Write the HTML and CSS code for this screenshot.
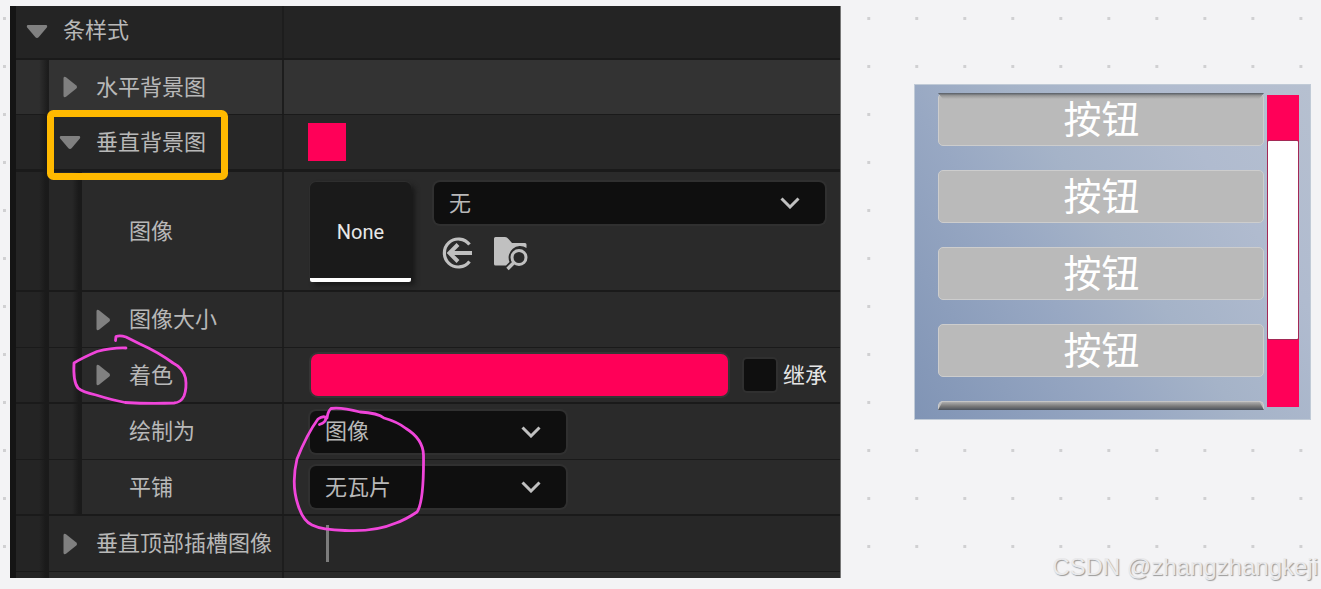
FILE: index.html
```
<!doctype html>
<html lang="zh-CN">
	<head>
		<meta charset="UTF-8" />
		<meta name="viewport" content="width=device-width, initial-scale=1.0" />
		<title>条样式</title>
		<link rel="stylesheet" href="styles.css">
	</head>
	<body>
		<div class="details">
			<div class="row head">
				<div class="name"><svg class="arrow" viewBox="0 0 22 22"><path d="M2 4h18q2 .5 .8 2.500l-8 9.500q-1.800 2-3.600 0l-8-9.500Q0 4.500 2 4z" /></svg><span>条样式</span></div>
				<div class="value"></div>
			</div>
			<div class="row hover">
				<div class="indent"></div>
				<div class="name"><svg class="arrow" viewBox="0 0 22 22"><path d="M4.500 2q.5-2 2.500-.8l10 8q2 1.800 0 3.600l-10 8q-2 1.200-2.500-.8z" /></svg><span>水平背景图</span></div>
				<div class="value"></div>
			</div>
			<div class="row sub thick">
				<div class="indent"></div>
				<div class="name"><svg class="arrow" viewBox="0 0 22 22"><path d="M2 5h18q2 .5 .8 2.500l-8 9.500q-1.800 2-3.600 0l-8-9.500Q0 5.500 2 5z" /></svg><span>垂直背景图</span></div>
				<div class="value"><div class="swatch"></div></div>
			</div>
			<div class="row tall">
				<div class="indent"></div>
				<div class="indent inner"></div>
				<div class="name"><span class="leaf">图像</span></div>
				<div class="value asset">
					<div class="thumb">None</div>
					<div class="picker">
						<div class="select wide"><span>无</span><svg class="chevron" viewBox="0 0 20 12"><path d="M1.500 1.500l8.500 8.500l8.500-8.500" /></svg></div>
						<div class="tools">
							<svg width="34" height="34" viewBox="0 0 34 34"><path class="line" d="M29.500 8.500A14 14 0 1 0 29.500 25.500" stroke-width="3.200" /><path class="line" d="M32 17H9.500M18 8.500L9.500 17l8.500 8.500" stroke-width="4" /></svg>
							<svg width="36" height="36" viewBox="0 0 36 36"><path class="fill" d="M3.500 1H13q2 0 3.500 2L20 7h13q1.500 0 1.500 1.500V12A11.500 11.500 0 0 0 17.500 26L14 29.500H3.500Q2 29.500 2 28V2.500Q2 1 3.500 1z" /><circle class="line" cx="27" cy="21.500" r="7" stroke-width="3" /><path class="line" d="M22 26.500L15.500 33" stroke-width="3.400" /></svg>
						</div>
					</div>
				</div>
			</div>
			<div class="row thin">
				<div class="indent"></div>
				<div class="indent inner"></div>
				<div class="name"><svg class="arrow" viewBox="0 0 22 22"><path d="M4.500 2q.5-2 2.500-.8l10 8q2 1.800 0 3.600l-10 8q-2 1.200-2.500-.8z" /></svg><span>图像大小</span></div>
				<div class="value"></div>
			</div>
			<div class="row">
				<div class="indent"></div>
				<div class="indent inner"></div>
				<div class="name"><svg class="arrow" viewBox="0 0 22 22"><path d="M4.500 2q.5-2 2.500-.8l10 8q2 1.800 0 3.600l-10 8q-2 1.200-2.500-.8z" /></svg><span>着色</span></div>
				<div class="value"><div class="color"></div><div class="check"></div><span class="inherit">继承</span></div>
			</div>
			<div class="row thin">
				<div class="indent"></div>
				<div class="indent inner"></div>
				<div class="name"><span class="leaf">绘制为</span></div>
				<div class="value"><div class="select"><span>图像</span><svg class="chevron" viewBox="0 0 20 12"><path d="M1.500 1.500l8.500 8.500l8.500-8.500" /></svg></div></div>
			</div>
			<div class="row">
				<div class="indent"></div>
				<div class="indent inner"></div>
				<div class="name"><span class="leaf">平铺</span></div>
				<div class="value"><div class="select"><span>无瓦片</span><svg class="chevron" viewBox="0 0 20 12"><path d="M1.500 1.500l8.500 8.500l8.500-8.500" /></svg></div></div>
			</div>
			<div class="row sub thin">
				<div class="indent"></div>
				<div class="name"><svg class="arrow" viewBox="0 0 22 22"><path d="M4.500 2q.5-2 2.500-.8l10 8q2 1.800 0 3.600l-10 8q-2 1.200-2.500-.8z" /></svg><span>垂直顶部插槽图像</span></div>
				<div class="value"><div class="bar"></div></div>
			</div>
			<div class="row last">
				<div class="indent"></div>
				<div class="name"></div>
				<div class="value"></div>
			</div>
		</div>

		<div class="preview">
			<div class="list">
				<div class="btn">按钮</div>
				<div class="btn">按钮</div>
				<div class="btn">按钮</div>
				<div class="btn">按钮</div>
				<div class="btn cut"></div>
			</div>
			<div class="scrollbar"><div class="handle"></div></div>
		</div>

		<!-- hand-drawn marks over the panel -->
		<svg class="marks" viewBox="0 0 1321 589">
			<rect x="50.500" y="113.500" width="174" height="63" rx="3" stroke="#ffb900" stroke-width="7" />
			<g stroke="#f045da" stroke-width="2.800" stroke-linecap="round" stroke-linejoin="round">
				<path d="M115.500 340.500L116 336.500Q120 335 126 337L140 344Q158 352 173 363Q183 368 185.500 378Q187 388 184 396Q181 402.500 174 403Q150 404 125 402.500Q112 400 96 395Q82 392 78 388Q73 382 74 363Q82 358 97 351.500Q112 347.500 126 348" />
				<path d="M319.500 424.500Q327 422 325.500 417Q322 416 318 419Q307 434 297 459Q291 484 298 505Q303 521 312 525Q322 530 345 530.500Q375 532 396 523Q405 520 417 512Q424 502 423.500 455Q423 439 406 428.500Q398 422 384 418Q378 413 360 412Q341 407 331 408.500Q328 411 327 418" />
			</g>
		</svg>
		<div class="watermark">CSDN @zhangzhangkeji</div>
	</body>
</html>
```
FILE: styles.css
```
* {
	box-sizing: border-box;
}
body {
	margin: 0;
	width: 1321px;
	height: 589px;
	padding: 6px 10px 0 10px;
	display: flex;
	justify-content: space-between;
	align-items: flex-start;
	overflow: hidden;
	position: relative;
	background-color: #f3f3f5;
	background-image: conic-gradient(from 270deg at 3px 3px, #d0d0d2 25%, transparent 0);
	background-position: 3px 17px;
	background-size: 48.030px 48px;
	font-family: "Noto Sans CJK SC", sans-serif;
	font-size: 22px;
	color: #b8b8b8;
}
.details {
	width: 831px;
	height: 572px;
	padding-left: 6px;
	background-color: #151515;
	border-right: 1px solid #777;
	overflow: hidden;
}
.row {
	display: flex;
	height: 56px;
	border-bottom: 2px solid #1a1a1a;
	background-color: #2a2a2a;
}
.row.thin {
	border-bottom-width: 1px;
}
.row.head {
	height: 54px;
	background-color: #242424;
}
.row.hover {
	height: 55px;
	border-bottom-width: 1px;
	background-color: #333;
}
.row.sub {
	background-color: #272727;
}
.row.thick {
	height: 57px;
	border-bottom-width: 3px;
}
.row.tall {
	height: 120px;
}
.indent {
	width: 33px;
	flex-shrink: 0;
	background: linear-gradient(90deg, #242424 70%, #1a1a1a 90%);
}
.indent.inner {
	background: linear-gradient(90deg, #272727 70%, #1a1a1a 90%);
}
.hover .indent {
	background: linear-gradient(90deg, #2e2e2e 70%, #1c1c1c 96%);
}
.name {
	display: flex;
	align-items: center;
	flex-shrink: 0;
	width: 268px;
	padding-left: 10px;
	border-right: 2px solid #1d1d1d;
	line-height: 30px;
	white-space: nowrap;
}
.indent + .name {
	width: 235px;
}
.inner + .name {
	width: 202px;
}
.name span {
	padding-bottom: 5px;
}
.head .name span {
	padding-bottom: 8px;
}
.arrow {
	width: 22px;
	height: 22px;
	margin-right: 15px;
	fill: #808080;
}
.name .leaf {
	margin-left: 37px;
}
.value {
	flex: 1;
	display: flex;
	align-items: center;
	padding-left: 26px;
}
.swatch {
	width: 38px;
	height: 38px;
	margin-left: -2px;
	background-color: #ff0058;
}
.asset {
	align-items: flex-start;
	padding-top: 10px;
}
.thumb {
	width: 101px;
	height: 100px;
	padding-top: 4px;
	display: flex;
	justify-content: center;
	align-items: center;
	border-radius: 6px 6px 2px 2px;
	border-bottom: 4px solid #fff;
	background-color: #1a1a1a;
	box-shadow: 4px 3px 5px #191919, 0 0 0 1px #303030;
	font-family: Roboto, sans-serif;
	font-size: 20px;
	color: #e8e8e8;
}
.picker {
	margin-left: 23px;
}
.select {
	display: flex;
	align-items: center;
	justify-content: space-between;
	width: 256px;
	height: 42px;
	border-radius: 6px;
	padding: 0 25px 0 15px;
	background-color: #0f0f0f;
	box-shadow: 0 0 0 2px #303030;
}
.select span {
	padding-bottom: 5px;
}
.select.wide {
	width: 391px;
}
.chevron {
	width: 20px;
	height: 12px;
	fill: none;
	stroke: #c0c0c0;
	stroke-width: 3;
}
.tools {
	display: flex;
	gap: 18px;
	padding: 12px 0 0 6px;
}
.tools .line {
	fill: none;
	stroke: #c0c0c0;
}
.tools .fill {
	fill: #c0c0c0;
}
.color {
	width: 417px;
	height: 42px;
	margin-left: 1px;
	border-radius: 7px;
	background-color: #ff0058;
	box-shadow: 0 0 0 2px #353535;
}
.check {
	width: 32px;
	height: 32px;
	margin: 0 7px 0 16px;
	border-radius: 3px;
	background-color: #0f0f0f;
	box-shadow: 0 0 0 2px #303030;
}
.inherit {
	padding-bottom: 5px;
	color: #e6e6e6;
}
.bar {
	width: 3px;
	height: 37px;
	margin-left: 16px;
	background-color: #7c7c7c;
}
.preview {
	display: flex;
	gap: 3px;
	width: 397px;
	height: 336px;
	margin-top: 78px;
	padding: 8px 11px 9px 23px;
	background: linear-gradient(55deg, #8094b5 0%, #98a8c3 35%, #a5b3c8 52%, #b0bbcf 75%, #b6c0d0 100%);
	border: 1px solid #c0cad6;
}
.list {
	position: relative;
	width: 326px;
	height: 317px;
}
/* fade at both clipped ends of the list */
.list::before,
.list::after {
	content: "";
	position: absolute;
	left: 0;
	right: 0;
	top: 0;
	height: 6px;
	background: linear-gradient(#555b63, #77777780 45%, transparent);
	clip-path: polygon(0 0, 100% 0, 98.500% 100%, 1.500% 100%);
}
.list::after {
	top: auto;
	bottom: 0;
	height: 9px;
	background: linear-gradient(transparent, #777 60%, #4c535d);
	clip-path: polygon(0 100%, 100% 100%, 98.500% 0, 1.500% 0);
}
.btn {
	height: 53px;
	margin-bottom: 24px;
	padding-left: 1px;
	border: 1px solid #cdcdcd;
	border-radius: 5px;
	background-color: #bababa;
	color: #fff;
	font-size: 38px;
	line-height: 46px;
	text-align: center;
}
.btn.cut {
	height: 9px;
	margin-bottom: 0;
	border-bottom: 0;
	border-radius: 5px 5px 0 0;
}
.scrollbar {
	width: 32px;
	height: 312px;
	margin-top: 2px;
	padding: 46px 1px 0;
	background-color: #ff0058;
}
.handle {
	height: 198px;
	border-radius: 1px;
	background-color: #fff;
	box-shadow: 0 0 0 1px #a32855;
}
.marks {
	position: absolute;
	left: 0;
	top: 0;
	width: 1321px;
	height: 589px;
	fill: none;
}
.watermark {
	position: absolute;
	right: 3px;
	bottom: 7px;
	font-family: "Liberation Sans", Arial, sans-serif;
	font-size: 24px;
	line-height: 30px;
	color: #e9e9eb;
	text-shadow: 1px 1px 1px #999;
}
```
